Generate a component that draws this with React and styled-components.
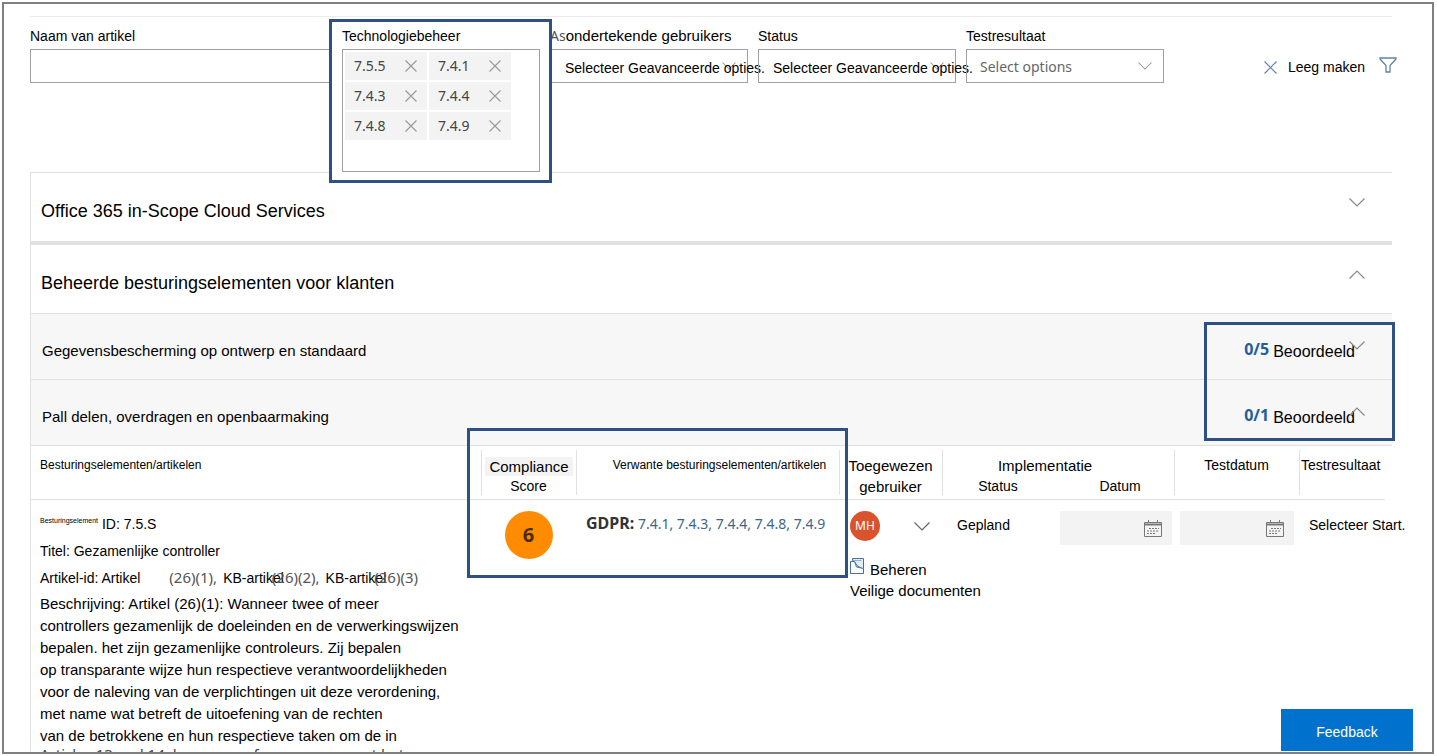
import React from "react";
import styled, { createGlobalStyle, css } from "styled-components";

const sans = '"Liberation Sans", Arial, sans-serif';
const ui = '"Noto Sans", "Open Sans", sans-serif';
const navy = "#2f5083";
const line = "#e1e1e1";

const GlobalStyle = createGlobalStyle`
  * { box-sizing: border-box; }
  body { margin: 0; background: #fff; color: #000; font: 14px/20px ${sans}; }
  button, input, select { font: inherit; color: inherit; border-radius: 0; }
  button { border: 0; padding: 0; background: none; cursor: pointer; }
  h2, h3, p, ul { margin: 0; padding: 0; font-weight: normal; }
  a { color: inherit; text-decoration: none; }
`;

const Page = styled.div`
  padding: 2px 3px 2px 2px;
  height: 100vh;
`;

const Frame = styled.main`
  position: relative;
  height: 100%;
  overflow: hidden;
  border: 2px solid #7f7f7f;
  padding: 12px 40px 0 26px;
`;

const Mark = styled.div`
  position: absolute;
  border: 3px solid ${navy};
  pointer-events: none;
`;

const FamilyMark = styled(Mark)`
  top: 8px;
  right: -3px;
  bottom: 5px;
  width: 191px;
`;

const ScoreMark = styled(Mark)`
  top: -18px;
  left: 32%;
  width: 28%;
  height: 150px;
`;

/* Filter bar */

const Filters = styled.form`
  display: flex;
  justify-content: space-between;
  border-top: 1px solid #ececec;
  padding-top: 9px;
`;

const Fields = styled.div`
  flex: 1;
  display: grid;
  grid-template-columns: minmax(0, 302fr) repeat(4, minmax(0, 198fr));
  column-gap: 10px;
`;

const Field = styled.div`
  display: flex;
  flex-direction: column;
  gap: 3px;
  position: relative;
`;

const MarkedField = styled(Field)`
  z-index: 1;
  &::before {
    content: "";
    position: absolute;
    z-index: -1;
    inset: -7px -12px -11px -13px;
    border: 3px solid ${navy};
    background: #fff;
  }
`;

const Label = styled.label`
  white-space: nowrap;
  font-size: ${(p) => (p.$large ? 15 : 14)}px;
  line-height: 20px;
`;

const Under = styled.span`
  color: #555;
  font-family: ${ui};
  font-size: 14px;
`;

const TextBox = styled.input`
  height: 34px;
  width: 100%;
  border: 1px solid #a0a0a0;
  background: #fff;
`;

const SelectBox = styled.div`
  position: relative;
  height: 34px;
  display: flex;
  border: 1px solid #a0a0a0;
`;

const Select = styled.select`
  position: relative;
  appearance: none;
  flex: none;
  width: calc(100% + 24px);
  border: 0;
  background: transparent;
  padding: ${(p) => (p.$native ? "2px 0 0 13px" : "4px 0 0 14px")};
  ${(p) =>
    p.$native &&
    css`
      width: 100%;
      font-family: ${ui};
      font-size: 14px;
      color: #666;
    `}
`;

const SelectArrow = styled.span`
  position: absolute;
  right: 11px;
  top: 12px;
  display: flex;
  pointer-events: none;
`;

const TagBox = styled.ul`
  height: 123px;
  border: 1px solid #a0a0a0;
  padding: 2px;
  display: flex;
  flex-wrap: wrap;
  align-content: flex-start;
  gap: 2px;
  list-style: none;
`;

const Tag = styled.li`
  width: 82px;
  height: 28px;
  display: flex;
  align-items: center;
  justify-content: space-between;
  padding: 0 10px 0 9px;
  background: #f3f3f3;
  color: #444;
  font: 14px/28px ${ui};
`;

const IconButton = styled.button`
  display: flex;
`;

const Actions = styled.div`
  display: flex;
  align-items: flex-start;
  gap: 14px;
  width: 233px;
  justify-content: flex-end;
  margin-right: -5px;
  padding-top: 31px;
`;

const ClearButton = styled.button`
  display: flex;
  align-items: center;
  gap: 11px;
`;

/* Accordion */

const Panel = styled.section`
  border: solid ${line};
  border-width: 1px 0 0 1px;
`;

const SectionBar = styled.button`
  width: 100%;
  height: ${(p) => (p.$open ? 69 : 72)}px;
  display: flex;
  justify-content: space-between;
  align-items: flex-start;
  padding: 25px 27px 0 10px;
  border-bottom: ${(p) => (p.$open ? "1px" : "4px")} solid ${line};
  text-align: left;
`;

const SectionTitle = styled.h2`
  padding-top: 2px;
  font-size: 18px;
  line-height: 22px;
`;

const Families = styled.div`
  position: relative;
`;

const FamilyBar = styled.button`
  width: 100%;
  height: 66px;
  display: flex;
  justify-content: space-between;
  padding: 27px 27px 0 11px;
  background: #f7f7f7;
  border-bottom: 1px solid ${line};
`;

const FamilyTitle = styled.h3`
  font-size: 15px;
  line-height: 20px;
`;

const Assessed = styled.span`
  display: flex;
  gap: 4px;
  font-size: 16px;
  line-height: 22px;
`;

const Count = styled.strong`
  color: #235f96;
  font: bold 16px/16px ${ui};
`;

const FamilyArrow = styled.span`
  display: flex;
  margin-left: -10px;
`;

/* Controls table */

const TableArea = styled.div`
  position: relative;
  padding-right: 7px;
`;

const Table = styled.table`
  width: 100%;
  table-layout: fixed;
  border-collapse: collapse;
`;

const Head = styled.th`
  position: relative;
  padding: ${(p) => (p.$second ? "0 0 2px" : "9px 0 0")};
  padding-left: ${(p) => p.$indent || 0}px;
  padding-right: ${(p) => p.$end || 0}px;
  vertical-align: top;
  font-weight: normal;
  font-size: ${(p) => p.$size || 14}px;
  line-height: 21px;
  text-align: ${(p) => p.$align || "center"};
  white-space: nowrap;
  ${(p) =>
    p.$rule &&
    css`
      &::before {
        content: "";
        position: absolute;
        left: 0;
        top: 4px;
        height: 45px;
        border-left: 1px solid ${line};
      }
    `}
`;

const HeadRows = styled.thead`
  border-bottom: 1px solid ${line};
`;

const Shade = styled.span`
  display: block;
  margin: 2px 3px 0 4px;
  line-height: 19px;
  background: #f3f3f3;
  font-size: 15px;
`;

const Cell = styled.td`
  padding: ${(p) => p.$top || 11}px 0 0 ${(p) => p.$left || 0}px;
  vertical-align: top;
  text-align: ${(p) => p.$align || "left"};
  white-space: nowrap;
`;

const Fact = styled.p`
  height: 27px;
  line-height: 27px;
`;

const Tiny = styled.span`
  font-size: 7px;
  line-height: 7px;
  vertical-align: 6px;
  margin-right: 4px;
`;

const Ref = styled.span`
  color: #555;
  font: 15px/20px ${ui};
  margin-left: ${(p) => (p.$wide ? 29 : -12)}px;
  margin-right: 6px;
`;

const Description = styled.p`
  padding-top: 1px;
  font-size: 15px;
  line-height: 22px;
`;

const Source = styled.span`
  display: block;
  color: #444;
  font: 15px/14px ${ui};
`;

const Score = styled.span`
  display: inline-flex;
  align-items: center;
  justify-content: center;
  width: 48px;
  height: 48px;
  border-radius: 50%;
  background: #ff8c00;
  color: #4a2c00;
  font: bold 20px/48px ${ui};
`;

const Related = styled.p`
  color: #3f6587;
  font: 14px/24px ${ui};
  strong {
    color: #333;
    font-size: 16px;
  }
`;

const User = styled.button`
  display: flex;
  align-items: center;
  gap: 34px;
`;

const Avatar = styled.span`
  width: 30px;
  height: 30px;
  border-radius: 50%;
  background: #d9532c;
  color: #fff;
  font: 12px/30px ${ui};
  text-align: center;
`;

const Manage = styled.a`
  display: block;
  margin-top: 17px;
  font-size: 15px;
  line-height: 21px;
  svg {
    vertical-align: 1px;
    margin-right: 6px;
  }
`;

const DateBox = styled.label`
  width: ${(p) => p.$width}%;
  height: 34px;
  display: flex;
  align-items: center;
  padding-right: 10px;
  background: #f3f3f3;
`;

const DateInput = styled.input`
  flex: 1;
  min-width: 0;
  border: 0;
  background: transparent;
`;

const Feedback = styled.button`
  position: absolute;
  right: 19px;
  bottom: 1px;
  width: 132px;
  height: 42px;
  padding-top: 4px;
  background: #0072ce;
  color: #fff;
`;

/* Icons */

const Cross = ({ size = 12, color = "#999" }) => (
  <svg width={size} height={size} viewBox="0 0 12 12" fill="none" stroke={color} strokeWidth="1.1">
    <path d="M.5.5l11 11M11.5.5l-11 11" />
  </svg>
);

const Chevron = ({ up, width = 16, color = "#888" }) => (
  <svg width={width} height={width / 2 + 1} viewBox="0 0 16 9" fill="none" stroke={color} strokeWidth="1.2">
    <path d={up ? "M.5 8.5L8 1l7.5 7.5" : "M.5.5L8 8 15.5.5"} />
  </svg>
);

const Funnel = () => (
  <svg width="18" height="16" viewBox="0 0 18 16" fill="none" stroke="#5f83a8" strokeWidth="1.3">
    <path d="M1 1h16v1L11 8.500V15H7V8.500L1 2z" />
  </svg>
);

const Calendar = () => (
  <svg width="18" height="17" viewBox="0 0 18 17" fill="none" stroke="#777" strokeWidth="1">
    <path d="M.5 2.500h17v14H.5zM4.500 0v3M13.500 0v3" />
    <path d="M.5 4.500h17" strokeWidth="2" />
    <path d="M5 8.500h10M3 11h12M3 13.500h9" strokeDasharray="2 1" />
  </svg>
);

const Inbox = () => (
  <svg width="14" height="16" viewBox="0 0 14 16" fill="none" stroke="#4a6f9c" strokeWidth="1">
    <path d="M2.500 3.500v-3h11v15H.5v-12h4l2.500 4 6.500 4" fill="#e3edf7" />
    <path d="M.5 3.500h4l2 5.500 7 1.500v5H.5z" fill="#fff" />
    <path d="M2.500 2.500h9" stroke="#8fb0d0" />
  </svg>
);

const tags = ["7.5.5", "7.4.1", "7.4.3", "7.4.4", "7.4.8", "7.4.9"];
const related = ["7.4.1", "7.4.3", "7.4.4", "7.4.8", "7.4.9"];
const columns = [450, 95, 263, 103, 118, 114, 125, 86];
const description = [
  "Beschrijving: Artikel (26)(1): Wanneer twee of meer",
  "controllers gezamenlijk de doeleinden en de verwerkingswijzen",
  "bepalen. het zijn gezamenlijke controleurs. Zij bepalen",
  "op transparante wijze hun respectieve verantwoordelijkheden",
  "voor de naleving van de verplichtingen uit deze verordening,",
  "met name wat betreft de uitoefening van de rechten",
  "van de betrokkene en hun respectieve taken om de in",
];

const Dropdown = ({ id, text, native }) => (
  <SelectBox>
    <SelectArrow>
      <Chevron width={14} color="#999" />
    </SelectArrow>
    <Select id={id} $native={native}>
      <option>{text}</option>
    </Select>
  </SelectBox>
);

const Family = ({ title, count, open }) => (
  <FamilyBar type="button" aria-expanded={!!open}>
    <FamilyTitle>{title}</FamilyTitle>
    <Assessed>
      <Count>{count}</Count>
      Beoordeeld
      <FamilyArrow>
        <Chevron up={open} />
      </FamilyArrow>
    </Assessed>
  </FamilyBar>
);

export default function App() {
  return (
    <Page>
      <GlobalStyle />
      <Frame>
        <Filters>
          <Fields>
            <Field>
              <Label htmlFor="name">Naam van artikel</Label>
              <TextBox id="name" />
            </Field>
            <MarkedField>
              <Label as="span">Technologiebeheer</Label>
              <TagBox>
                {tags.map((t) => (
                  <Tag key={t}>
                    {t}
                    <IconButton type="button" aria-label={t}>
                      <Cross />
                    </IconButton>
                  </Tag>
                ))}
              </TagBox>
            </MarkedField>
            <Field>
              <Label htmlFor="users" $large>
                <Under>As</Under>ondertekende gebruikers
              </Label>
              <Dropdown id="users" text="Selecteer Geavanceerde opties." />
            </Field>
            <Field>
              <Label htmlFor="status">Status</Label>
              <Dropdown id="status" text="Selecteer Geavanceerde opties." />
            </Field>
            <Field>
              <Label htmlFor="result">Testresultaat</Label>
              <Dropdown id="result" text="Select options" native />
            </Field>
          </Fields>
          <Actions>
            <ClearButton type="reset">
              <Cross size={13} color="#5f83a8" />
              Leeg maken
            </ClearButton>
            <IconButton type="button" aria-label="Filter">
              <Funnel />
            </IconButton>
          </Actions>
        </Filters>

        <Panel>
          <SectionBar type="button">
            <SectionTitle>Office 365 in-Scope Cloud Services</SectionTitle>
            <Chevron />
          </SectionBar>
          <SectionBar type="button" $open>
            <SectionTitle>Beheerde besturingselementen voor klanten</SectionTitle>
            <Chevron up />
          </SectionBar>
          <Families>
            <Family title="Gegevensbescherming op ontwerp en standaard" count="0/5" />
            <Family title="Pall delen, overdragen en openbaarmaking" count="0/1" open />
            <FamilyMark />
          </Families>

          <TableArea>
            <Table>
              <colgroup>
                {columns.map((w, i) => (
                  <col key={i} style={{ width: w }} />
                ))}
              </colgroup>
              <HeadRows>
                <tr>
                  <Head rowSpan={2} $align="left" $indent={9} $size={12}>
                    Besturingselementen/artikelen
                  </Head>
                  <Head rowSpan={2} $rule>
                    <Shade>Compliance</Shade>
                    Score
                  </Head>
                  <Head rowSpan={2} $rule $size={12} $indent={24}>
                    Verwante besturingselementen/artikelen
                  </Head>
                  <Head rowSpan={2} $rule $size={15}>
                    Toegewezen
                    <br />
                    gebruiker
                  </Head>
                  <Head colSpan={2} $rule $size={15} $end={26}>
                    Implementatie
                  </Head>
                  <Head rowSpan={2} $rule>
                    Testdatum
                  </Head>
                  <Head rowSpan={2} $rule $align="left" $indent={2}>
                    Testresultaat
                  </Head>
                </tr>
                <tr>
                  <Head $second $end={6}>
                    Status
                  </Head>
                  <Head $second $indent={6}>
                    Datum
                  </Head>
                </tr>
              </HeadRows>
              <tbody>
                <tr>
                  <Cell $left={9}>
                    <Fact>
                      <Tiny>Besturingselement</Tiny>
                      ID: 7.5.S
                    </Fact>
                    <Fact>Titel: Gezamenlijke controller</Fact>
                    <Fact>
                      Artikel-id: Artikel
                      <Ref $wide>(26)(1),</Ref>
                      KB-artikel
                      <Ref>(26)(2),</Ref>
                      KB-artikel
                      <Ref>(26)(3)</Ref>
                    </Fact>
                    <Description>
                      {description.map((d) => (
                        <React.Fragment key={d}>
                          {d}
                          <br />
                        </React.Fragment>
                      ))}
                      <Source>Articles 13 and 14, by means of an arrangement between</Source>
                    </Description>
                  </Cell>
                  <Cell $align="center">
                    <Score>6</Score>
                  </Cell>
                  <Cell $left={10}>
                    <Related>
                      <strong>GDPR:</strong>{" "}
                      {related.map((r, i) => (
                        <React.Fragment key={r}>
                          {i > 0 && ", "}
                          <a href={"#" + r}>{r}</a>
                        </React.Fragment>
                      ))}
                    </Related>
                  </Cell>
                  <Cell $left={11}>
                    <User type="button">
                      <Avatar>MH</Avatar>
                      <Chevron color="#666" />
                    </User>
                    <Manage href="#documenten">
                      <Inbox />
                      Beheren
                      <br />
                      Veilige documenten
                    </Manage>
                  </Cell>
                  <Cell $left={15} $top={15}>
                    Gepland
                  </Cell>
                  <Cell>
                    <DateBox $width={98}>
                      <DateInput aria-label="Datum" />
                      <Calendar />
                    </DateBox>
                  </Cell>
                  <Cell $left={6}>
                    <DateBox $width={96}>
                      <DateInput aria-label="Testdatum" />
                      <Calendar />
                    </DateBox>
                  </Cell>
                  <Cell $left={10} $top={15}>
                    Selecteer Start.
                  </Cell>
                </tr>
              </tbody>
            </Table>
            <ScoreMark />
          </TableArea>
        </Panel>
        <Feedback type="button">Feedback</Feedback>
      </Frame>
    </Page>
  );
}
